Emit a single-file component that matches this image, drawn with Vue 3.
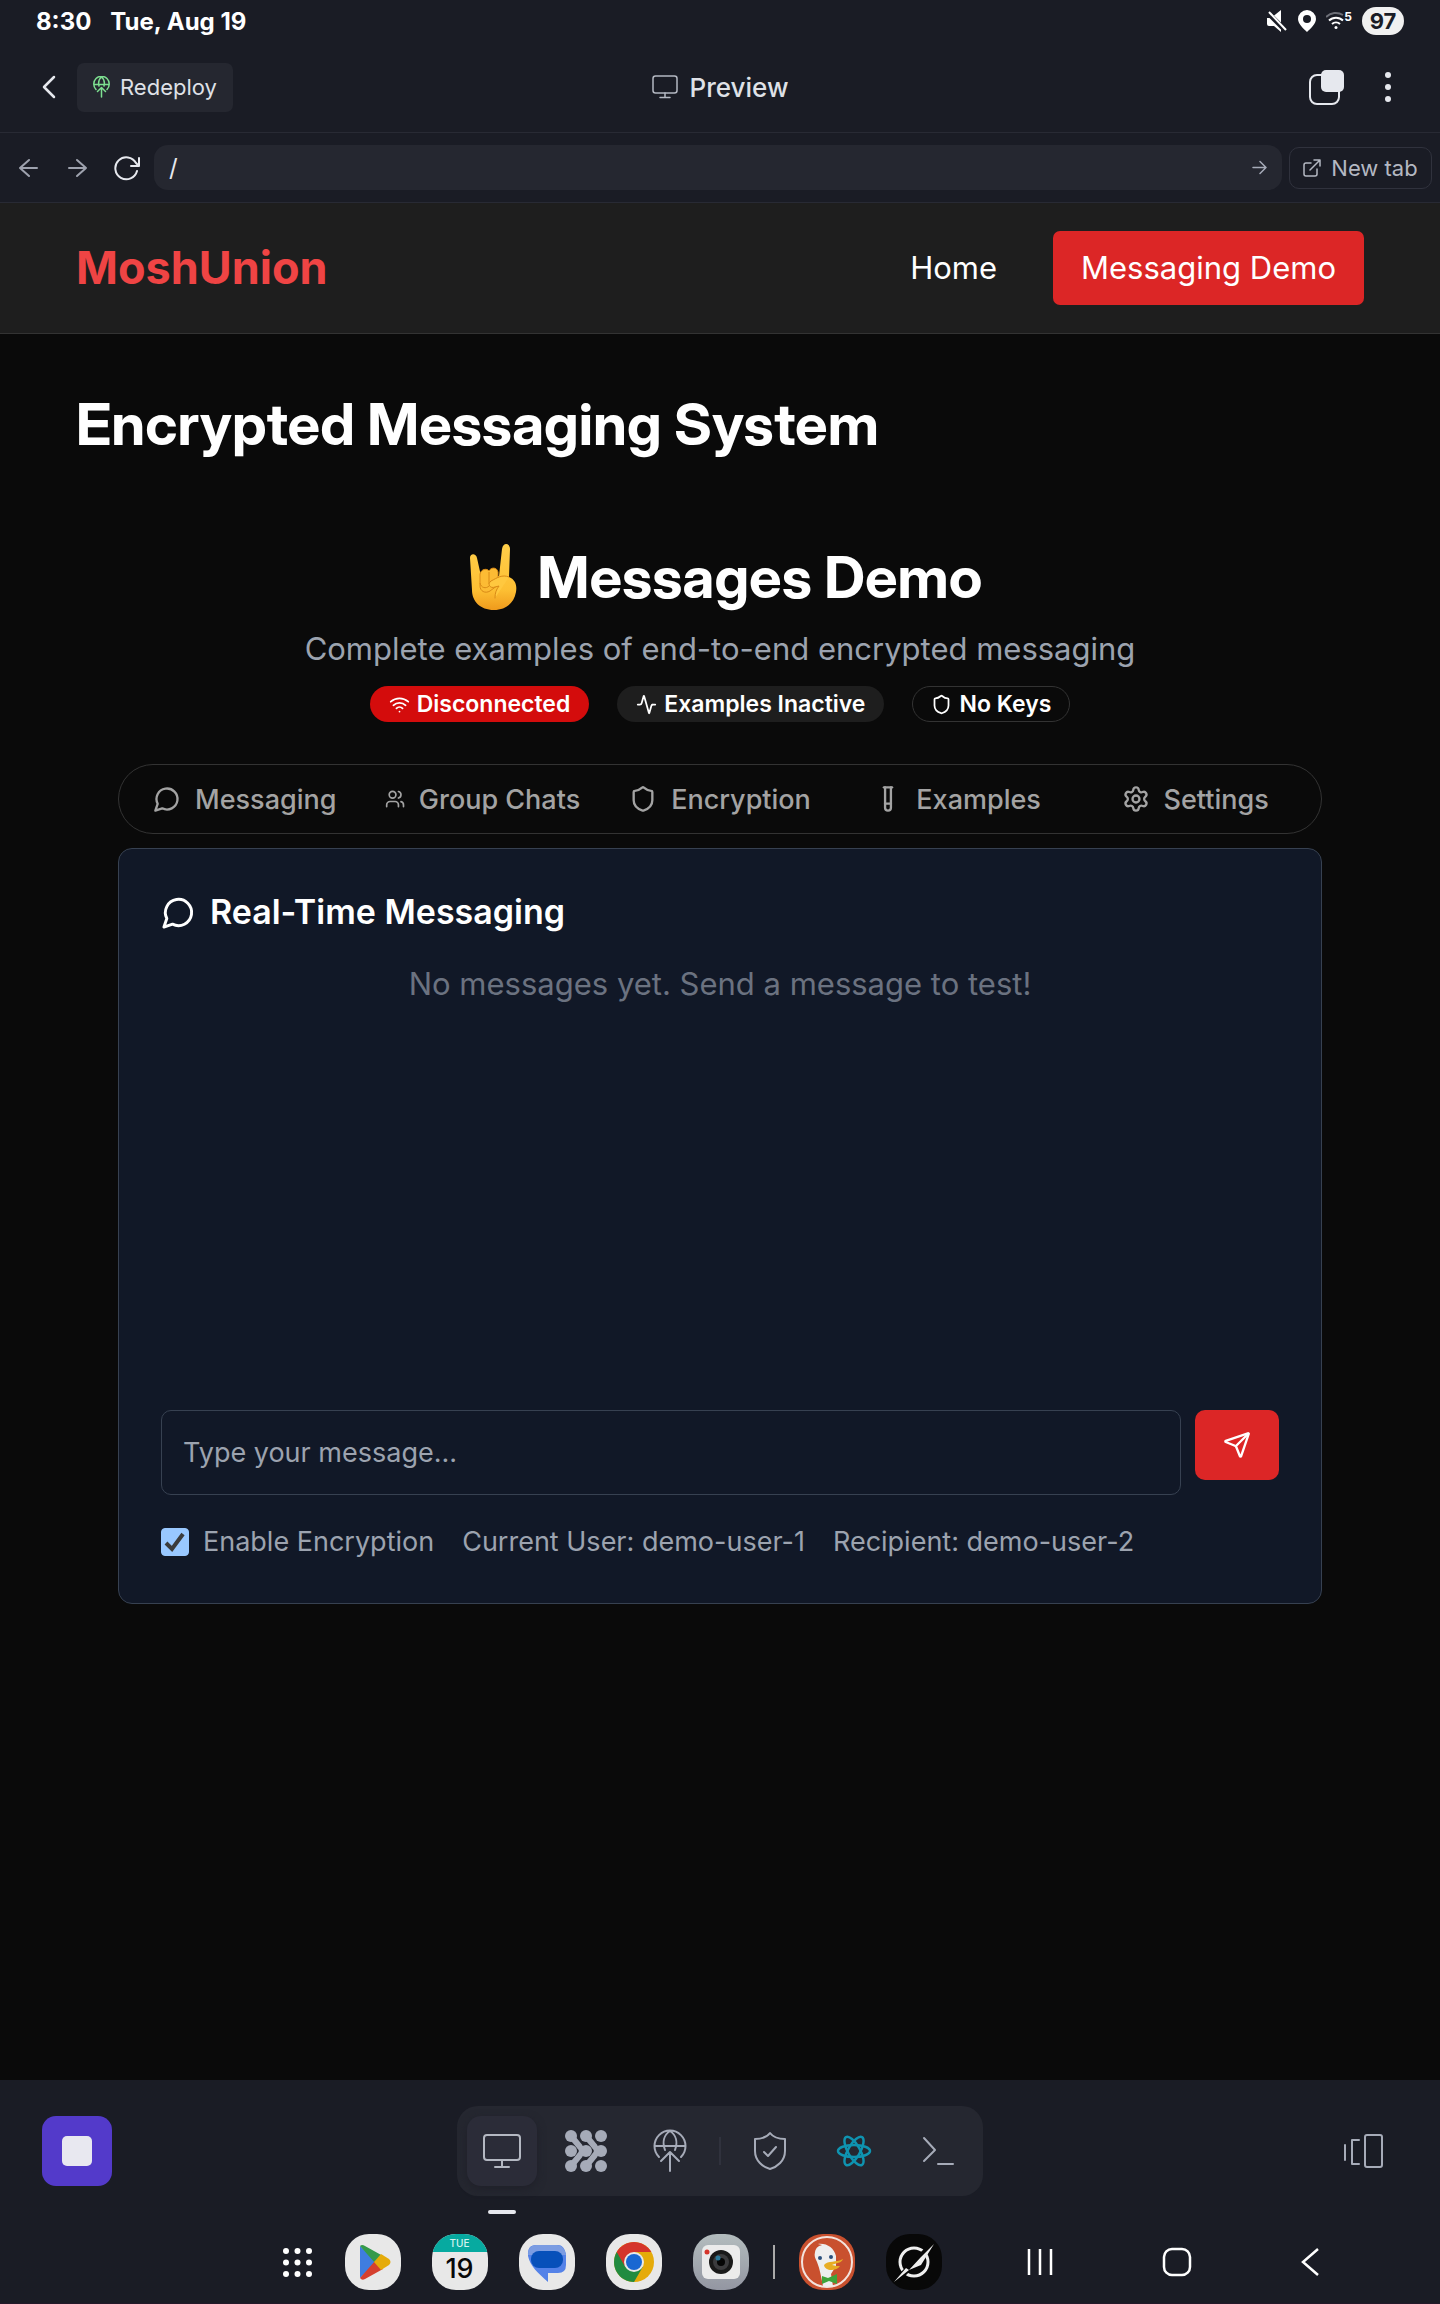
<script setup>
import { ref } from 'vue'

const url = ref('/')
const draft = ref('')
const encrypted = ref(true)

const icons = {
  message: ['M7.9 20A9 9 0 1 0 4 16.1L2 22Z'],
  users: ['M16 21v-2a4 4 0 0 0-4-4H6a4 4 0 0 0-4 4v2', 'M5 7a4 4 0 1 0 8 0a4 4 0 1 0-8 0', 'M22 21v-2a4 4 0 0 0-3-3.87', 'M16 3.13a4 4 0 0 1 0 7.75'],
  shield: ['M20 13c0 5-3.5 7.5-7.66 8.95a1 1 0 0 1-.67-.01C7.5 20.5 4 18 4 13V6a1 1 0 0 1 1-1c2 0 4.5-1.2 6.24-2.72a1.17 1.17 0 0 1 1.52 0C14.51 3.81 17 5 19 5a1 1 0 0 1 1 1z'],
  tube: ['M14.5 2v17.5c0 1.4-1.1 2.5-2.5 2.5c-1.4 0-2.5-1.1-2.5-2.5V2', 'M8.5 2h7', 'M14.5 16h-5'],
  settings: ['M9.671 4.136a2.34 2.34 0 0 1 4.659 0 2.34 2.34 0 0 0 3.319 1.915 2.34 2.34 0 0 1 2.33 4.033 2.34 2.34 0 0 0 0 3.831 2.34 2.34 0 0 1-2.33 4.033 2.34 2.34 0 0 0-3.319 1.915 2.34 2.34 0 0 1-4.659 0 2.34 2.34 0 0 0-3.32-1.915 2.34 2.34 0 0 1-2.33-4.033 2.34 2.34 0 0 0 0-3.831A2.34 2.34 0 0 1 6.35 6.051a2.34 2.34 0 0 0 3.319-1.915', 'M9 12a3 3 0 1 0 6 0a3 3 0 1 0-6 0'],
  wifi: ['M12 20h.01', 'M2 8.82a15 15 0 0 1 20 0', 'M5 12.859a10 10 0 0 1 14 0', 'M8.5 16.429a5 5 0 0 1 7 0'],
  activity: ['M22 12h-2.48a2 2 0 0 0-1.93 1.46l-2.35 8.36a.25.25 0 0 1-.48 0L9.24 2.18a.25.25 0 0 0-.48 0l-2.35 8.36A2 2 0 0 1 4.49 12H2'],
  send: ['M14.536 21.686a.5.5 0 0 0 .937-.024l6.5-19a.496.496 0 0 0-.635-.635l-19 6.5a.5.5 0 0 0-.024.937l7.93 3.18a2 2 0 0 1 1.112 1.11z', 'm21.854 2.147-10.94 10.939'],
}

const badges = [
  { label: 'Disconnected', icon: 'wifi', kind: 'danger' },
  { label: 'Examples Inactive', icon: 'activity', kind: 'muted' },
  { label: 'No Keys', icon: 'shield', kind: 'outline' },
]

const tabs = [
  { label: 'Messaging', icon: 'message' },
  { label: 'Group Chats', icon: 'users' },
  { label: 'Encryption', icon: 'shield' },
  { label: 'Examples', icon: 'tube' },
  { label: 'Settings', icon: 'settings' },
]
</script>

<template>
  <div class="screen">
    <div class="status">
      <span>8:30</span>
      <span class="date">Tue, Aug 19</span>
      <div class="status-icons">
        <svg width="21" height="22" viewBox="0 0 21 22"><path d="M0 8h4L14 0v22L7 16H2Q0 16 0 14z" fill="#fff" /><path d="M0 2L19 21" stroke="#1a1c25" stroke-width="5" /><path d="M2 2L19 20" stroke="#fff" stroke-width="2" /></svg>
        <svg width="18" height="22" viewBox="0 0 18 22"><path d="M9 0a9 9 0 0 1 9 9c0 5-6 10-9 13C6 19 0 14 0 9a9 9 0 0 1 9-9z" fill="#fff" /><circle cx="9" cy="9" r="4" fill="#1a1c25" /></svg>
        <div class="wifi">
          <svg width="20" height="20" viewBox="0 0 20 20" fill="none" stroke="#fff" stroke-width="2"><path d="M0 6a14 14 0 0 1 17-2" stroke="#6d6f77" /><path d="M3 9.500a10 10 0 0 1 14 0M6 13a6 6 0 0 1 8 0" /><circle cx="10" cy="16.500" r="1.500" fill="#fff" stroke="none" /></svg>
          <span>5</span>
        </div>
        <span class="battery">97</span>
      </div>
    </div>

    <header class="app-bar">
      <div class="bar-left">
        <button class="plain" aria-label="Back"><svg width="14" height="24" viewBox="0 0 14 24" fill="none" stroke="#e6e8ee" stroke-width="2.500" stroke-linecap="round" stroke-linejoin="round"><path d="M12 2L2 12l10 10" /></svg></button>
        <button class="redeploy">
          <svg width="17" height="22" viewBox="0 0 34 44" fill="none" stroke="#7ddf90" stroke-width="3" stroke-linecap="round" stroke-linejoin="round"><path d="M6 27a15.500 15.500 0 1 1 22 0M2 17h30M12 20C10 12 12 6 17 2c5 4 7 10 5 18M17 42V23M9 31l8-8 8 8" /></svg>
          Redeploy
        </button>
      </div>
      <div class="bar-title">
        <svg width="26" height="24" viewBox="0 0 26 24" fill="none" stroke="#b4b8c2" stroke-width="1.500" stroke-linecap="round"><rect x="1" y="1" width="24" height="17" rx="2.500" /><path d="M13 18v4.500M8 22.500h10" /></svg>
        <span>Preview</span>
      </div>
      <div class="bar-right">
        <button class="plain" aria-label="Windows"><svg width="35" height="35" viewBox="0 0 35 35"><rect x="1" y="5" width="29" height="29" rx="7" fill="none" stroke="#e6e8ee" stroke-width="2" /><rect x="12" y="0" width="23" height="22" rx="5" fill="#e6e8ee" /></svg></button>
        <button class="plain" aria-label="More"><svg width="8" height="32" viewBox="0 0 8 32" fill="#e6e8ee"><circle cx="4" cy="4" r="3" /><circle cx="4" cy="16" r="3" /><circle cx="4" cy="28" r="3" /></svg></button>
      </div>
    </header>

    <div class="url-bar">
      <button class="plain nav-btn" aria-label="Previous page"><svg width="20" height="20" viewBox="0 0 20 20" fill="none" stroke="#9ea2ae" stroke-width="2" stroke-linecap="round" stroke-linejoin="round"><path d="M18 10H1M10 2L1 10l9 8" /></svg></button>
      <button class="plain nav-btn" aria-label="Next page"><svg width="20" height="20" viewBox="0 0 20 20" fill="none" stroke="#9ea2ae" stroke-width="2" stroke-linecap="round" stroke-linejoin="round"><path d="M1 10h17M9 2l9 8-9 8" /></svg></button>
      <button class="plain nav-btn" aria-label="Reload"><svg width="26" height="26" viewBox="0 0 26 26" fill="none" stroke="#e6e8ee" stroke-width="2" stroke-linecap="round" stroke-linejoin="round"><path d="M23 16a11 11 0 1 1-1-8l3 3M25 3v8h-8" /></svg></button>
      <div class="address">
        <input v-model="url" type="text" aria-label="Address" />
        <button class="plain" aria-label="Go"><svg width="15" height="15" viewBox="0 0 15 15" fill="none" stroke="#a6abb8" stroke-width="1.500" stroke-linecap="round" stroke-linejoin="round"><path d="M1 7.500h13M8 1.500l6 6-6 6" /></svg></button>
      </div>
      <button class="new-tab">
        <svg width="18" height="18" viewBox="0 0 18 18" fill="none" stroke="#b4b8c2" stroke-width="1.500" stroke-linecap="round" stroke-linejoin="round"><path d="M8 4H3a2 2 0 0 0-2 2v9a2 2 0 0 0 2 2h9a2 2 0 0 0 2-2v-5M7 11L17 1M11 1h6v6" /></svg>
        New tab
      </button>
    </div>

    <nav class="site-nav">
      <a class="brand" href="#">MoshUnion</a>
      <div class="links">
        <a href="#">Home</a>
        <a class="current" href="#">Messaging Demo</a>
      </div>
    </nav>

    <main>
      <h1>Encrypted Messaging System</h1>
      <div class="demo">
        <h2>
          <svg class="horns" width="50" height="66" viewBox="0 0 50 66" role="img" aria-label="Rock on">
            <defs>
              <linearGradient id="skin" x1="0" y1="0" x2="0" y2="1"><stop offset="0" stop-color="#ffcf4a" /><stop offset=".7" stop-color="#fdbf33" /><stop offset="1" stop-color="#ef9a1c" /></linearGradient>
            </defs>
            <path d="M2 14c0-5 6-5 7 0l4 18h18l3-27c1-7 8-6 8 0l-1 28c7 3 8 9 7 15-2 11-10 18-22 18C12 66 4 57 4 46z" fill="url(#skin)" />
            <path d="M12 30c1-5 7-6 9-3 2-4 8-4 9 1v13l-8 6c-5 3-10 0-10-5z" fill="#fcbb34" stroke="#d98a16" />
            <path d="M21 28v12M12 39c1 5 6 6 9 3" fill="none" stroke="#d98a16" />
            <path d="M41 33c-7-3-12 1-18 4-4 3-1 8 4 6l4-1c-3 4-4 7-4 12" fill="#ffc83f" stroke="#d98a16" stroke-linecap="round" />
          </svg>
          <span>Messages Demo</span>
        </h2>
        <p class="subtitle">Complete examples of end-to-end encrypted messaging</p>
        <div class="badges">
          <span v-for="b in badges" :key="b.label" class="badge" :class="b.kind">
            <svg class="stroke" width="21" height="21" viewBox="0 0 24 24"><path v-for="d in icons[b.icon]" :key="d" :d="d" /></svg>
            {{ b.label }}
          </span>
        </div>

        <div class="tabs" role="tablist">
          <button v-for="t in tabs" :key="t.label" role="tab">
            <svg class="stroke" width="28" height="28" viewBox="0 0 24 24"><path v-for="d in icons[t.icon]" :key="d" :d="d" /></svg>
            {{ t.label }}
          </button>
        </div>

        <section class="card">
          <h3>
            <svg class="stroke" width="35" height="35" viewBox="0 0 24 24"><path :d="icons.message[0]" /></svg>
            Real-Time Messaging
          </h3>
          <div class="messages"><p>No messages yet. Send a message to test!</p></div>
          <form class="composer" @submit.prevent>
            <input v-model="draft" type="text" placeholder="Type your message..." aria-label="Message" />
            <button type="submit" aria-label="Send"><svg class="stroke" width="28" height="28" viewBox="0 0 24 24"><path v-for="d in icons.send" :key="d" :d="d" /></svg></button>
          </form>
          <div class="options">
            <label for="encrypt">
              <span class="check">
                <input id="encrypt" v-model="encrypted" type="checkbox" />
                <svg v-if="encrypted" width="28" height="28" viewBox="0 0 28 28" fill="none" stroke="#3b3b3b" stroke-width="4"><path d="M5 15l6 6L22 6" /></svg>
              </span>
              Enable Encryption
            </label>
            <span>Current User: demo-user-1</span>
            <span>Recipient: demo-user-2</span>
          </div>
        </section>
      </div>
    </main>

    <footer>
      <div class="tool-row">
        <button class="stop" aria-label="Stop"><svg width="30" height="30" viewBox="0 0 30 30"><rect width="30" height="30" rx="5" fill="#e8e8f0" /></svg></button>
        <div class="tools">
          <button class="active" aria-label="Preview"><svg width="38" height="36" viewBox="0 0 38 36" fill="none" stroke="#b4b8c2" stroke-width="2" stroke-linecap="round"><rect x="1" y="2" width="36" height="25" rx="3" /><path d="M19 27v7M12 34h14" /></svg></button>
          <button aria-label="Agent">
            <svg width="42" height="42" viewBox="0 0 42 42" fill="#a6abb8">
              <circle cx="6" cy="6" r="6" /><circle cx="21" cy="6" r="6" /><circle cx="36" cy="6" r="6" />
              <circle cx="6" cy="21" r="6" /><circle cx="21" cy="21" r="6" /><circle cx="36" cy="21" r="6" />
              <circle cx="6" cy="36" r="6" /><circle cx="21" cy="36" r="6" /><circle cx="36" cy="36" r="6" />
              <path d="M6 6L15 17Q19 21 15 25L6 36M21 6L30 17Q34 21 30 25L21 36" fill="none" stroke="#a6abb8" stroke-width="6" />
            </svg>
          </button>
          <button aria-label="Deployments"><svg width="34" height="44" viewBox="0 0 34 44" fill="none" stroke="#a6abb8" stroke-width="2" stroke-linecap="round" stroke-linejoin="round"><path d="M6 28a15.500 15.500 0 1 1 22 0M2 17h30M12 21C9 13 11 6 17 2c6 4 8 11 5 19M17 42V23M8 32l9-9 9 9" /></svg></button>
          <span class="divider"></span>
          <button aria-label="Security"><svg width="34" height="40" viewBox="0 0 34 40" fill="none" stroke="#a6abb8" stroke-width="2" stroke-linecap="round" stroke-linejoin="round"><path d="M17 2c3 4 9 6 15 6v12c0 10-8 16-15 18C10 36 2 30 2 20V8c6 0 12-2 15-6zM11 21l4 4 8-9" /></svg></button>
          <button aria-label="React">
            <svg width="36" height="36" viewBox="0 0 36 36" fill="none" stroke="#0f93b0" stroke-width="2.500"><ellipse cx="18" cy="18" rx="16" ry="6" /><ellipse cx="18" cy="18" rx="16" ry="6" transform="rotate(60 18 18)" /><ellipse cx="18" cy="18" rx="16" ry="6" transform="rotate(120 18 18)" /></svg>
          </button>
          <button aria-label="Shell"><svg width="32" height="30" viewBox="0 0 32 30" fill="none" stroke="#a6abb8" stroke-width="2" stroke-linecap="round" stroke-linejoin="round"><path d="M2 2l11 12L2 25M16 28h15" /></svg></button>
        </div>
        <button class="plain side" aria-label="Panels"><svg width="40" height="34" viewBox="0 0 40 34" fill="none" stroke="#a6abb8" stroke-width="2" stroke-linecap="round" stroke-linejoin="round"><path d="M2 11v15M16 6H9v24h7" /><rect x="22" y="1" width="17" height="32" rx="2" /></svg></button>
      </div>

      <div class="dock">
        <button class="plain dots" aria-label="All apps">
          <svg width="29" height="29" viewBox="0 0 29 29" fill="#fff"><circle v-for="n in 9" :key="n" :cx="3 + ((n - 1) % 3) * 11.500" :cy="3 + Math.floor((n - 1) / 3) * 11.500" r="3" /></svg>
        </button>
        <div class="apps">
          <button class="app" aria-label="Play Store"><svg width="56" height="56" viewBox="0 0 56 56"><path d="M15 12v32l17-16z" fill="#3f7de0" /><path d="M15 12q2-2 5 0l18 10-8 7z" fill="#359a4b" /><path d="M15 44q2 3 5 1l18-10-8-8z" fill="#d5402f" /><path d="M36 20l8 5q3 3 0 6l-8 5-7-8z" fill="#e5ab0a" /></svg></button>
          <button class="app calendar" aria-label="Calendar"><span class="cal-head">TUE</span><span class="cal-day">19</span></button>
          <button class="app" aria-label="Messages"><svg width="56" height="56" viewBox="0 0 56 56"><path d="M17 11h22q6 0 8 9v11q0 8-8 8H29v9C19 39 11 32 9 22q-1-11 8-11z" fill="#5482e8" /><path d="M17 11h21q7 0 9 10H9q0-10 8-10z" fill="#7b9ce2" /><rect x="12" y="17" width="32" height="17" rx="8" fill="#0750ba" /></svg></button>
          <button class="app" aria-label="Chrome"><svg width="56" height="56" viewBox="0 0 56 56"><circle cx="28" cy="28" r="20" fill="#e5ab0a" /><path d="M10.700 18A20 20 0 0 0 28 48l8.700-15L28 28z" fill="#218b40" /><path d="M10.700 18A20 20 0 0 1 45.300 18H28v10l-8.700 5z" fill="#d5352b" /><circle cx="28" cy="28" r="10" fill="#e8e8e8" /><circle cx="28" cy="28" r="8" fill="#1967d2" /></svg></button>
          <button class="app camera" aria-label="Camera"><svg width="56" height="56" viewBox="0 0 56 56"><rect x="9" y="11" width="38" height="34" rx="6" fill="#ebebeb" /><circle cx="14" cy="18" r="2.500" fill="#d5352b" /><circle cx="28" cy="28" r="12" fill="#191919" /><circle cx="28" cy="28" r="8" fill="#3b3b3d" /><circle cx="28" cy="28" r="4" fill="#050505" /><circle cx="25" cy="24" r="2.500" fill="#2b7a9b" /></svg></button>
        </div>
        <span class="dock-divider"></span>
        <div class="apps">
          <button class="app duck" aria-label="DuckDuckGo"><svg width="56" height="56" viewBox="0 0 56 56"><circle cx="28" cy="28" r="25" fill="none" stroke="#f4e3dd" stroke-width="2" /><path d="M16 18c1-5 4-6 7-7l-4-1c9-1 16 4 18 12v10l-5 8 2 12q-5 1-10 0c-2-9-3-17-6-24-2-4-3-6-2-10z" fill="#eee" /><circle cx="21" cy="24" r="2" fill="#2a4f7c" /><circle cx="32" cy="23" r="2" fill="#2a4f7c" /><path d="M25 31c4-5 12-2 19-6-1 4-7 4-11 6 3 1 6 1 8 1-3 5-15 6-16-1z" fill="#e8ad24" /><path d="M23 42l6 2 9-4v10l-8-3-7 3z" fill="#3fa33a" /></svg></button>
          <button class="app grok" aria-label="Grok"><svg width="56" height="56" viewBox="0 0 56 56"><circle cx="28" cy="28" r="14" fill="none" stroke="#efefef" stroke-width="3" /><path d="M11 46L46 11" stroke="#080808" stroke-width="6" /><path d="M8 48l12-14 3 2zM48 10L35 31l-12 5 12-13z" fill="#efefef" /></svg></button>
        </div>
        <div class="system">
          <button class="plain" aria-label="Recents"><svg width="28" height="28" viewBox="0 0 28 28" stroke="#fff" stroke-width="2.500"><path d="M3 1v26M14 1v26M25 1v26" /></svg></button>
          <button class="plain" aria-label="Home screen"><svg width="30" height="30" viewBox="0 0 30 30"><rect x="2" y="2" width="26" height="26" rx="8" fill="none" stroke="#fff" stroke-width="2.500" /></svg></button>
          <button class="plain" aria-label="System back"><svg width="20" height="28" viewBox="0 0 20 28" fill="none" stroke="#fff" stroke-width="2.500"><path d="M18 1L3 14l15 13" /></svg></button>
        </div>
      </div>
    </footer>
  </div>
</template>

<style>
body {
  margin: 0;
  background: #0a0a0a;
}
</style>

<style scoped>
.screen {
  display: flex;
  flex-direction: column;
  min-height: 100vh;
  background: #0a0a0a;
  color: #fff;
  font-family: Inter, "Liberation Sans", sans-serif;
}
.screen *, .screen *::before {
  box-sizing: border-box;
}
button, input {
  font-family: inherit;
  color: inherit;
}
button {
  display: flex;
  align-items: center;
  justify-content: center;
  margin: 0;
  padding: 0;
  border: 0;
  cursor: pointer;
}
svg {
  display: block;
  flex-shrink: 0;
}
a {
  color: inherit;
  text-decoration: none;
}
h1, h2, h3, p {
  margin: 0;
}
.plain {
  background: none;
}
.stroke {
  fill: none;
  stroke: currentColor;
  stroke-width: 2;
  stroke-linecap: round;
  stroke-linejoin: round;
}

.status {
  display: flex;
  align-items: center;
  height: 42px;
  padding: 0 36px;
  background: #1a1c25;
  font-size: 24px;
  font-weight: 700;
}
.date {
  margin-left: 19px;
}
.status-icons {
  display: flex;
  align-items: center;
  gap: 10px;
  margin-left: auto;
}
.wifi {
  display: flex;
  align-items: flex-start;
}
.wifi span {
  font-size: 12px;
  line-height: 12px;
  margin-left: -2px;
}
.battery {
  width: 42px;
  border-radius: 14px;
  background: #f0f0f0;
  color: #1a1c25;
  font-size: 22px;
  line-height: 28px;
  text-align: center;
}

.app-bar {
  display: grid;
  grid-template-columns: 1fr auto 1fr;
  align-items: center;
  height: 91px;
  padding: 0 42px;
  border-bottom: 1px solid #282a34;
  background: #1a1c25;
  color: #dfe1e7;
}
.bar-left, .bar-title, .bar-right {
  display: flex;
  align-items: center;
}
.bar-left {
  gap: 21px;
}
.bar-right {
  justify-content: flex-end;
  gap: 40px;
  padding-right: 6px;
}
.bar-title {
  gap: 12px;
  font-size: 26px;
  font-weight: 500;
}
.redeploy {
  gap: 10px;
  height: 49px;
  padding: 0 16px;
  border-radius: 7px;
  background: #252730;
  font-size: 22px;
}

.url-bar {
  display: flex;
  align-items: center;
  height: 70px;
  padding: 0 8px 0 4px;
  border-bottom: 1px solid #282a34;
  background: #1a1c25;
}
.nav-btn {
  width: 49px;
  height: 45px;
}
.address {
  display: flex;
  flex: 1;
  align-items: center;
  height: 45px;
  margin: 0 7px 0 3px;
  padding: 0 15px;
  border-radius: 14px;
  background: #252730;
}
.address input {
  flex: 1;
  min-width: 0;
  padding: 0;
  border: 0;
  outline: 0;
  background: none;
  color: #e6e8ee;
  font-size: 24px;
}
.new-tab {
  gap: 10px;
  width: 143px;
  height: 42px;
  border: 1px solid #30323d;
  border-radius: 10px;
  background: none;
  color: #b4b8c2;
  font-size: 22px;
  white-space: nowrap;
}

.site-nav {
  display: flex;
  align-items: center;
  justify-content: space-between;
  padding: 28px 76px;
  border-bottom: 1px solid #333;
  background: #1e1e1e;
  font-size: 31px;
  line-height: 46px;
}
.brand {
  color: #ef4444;
  font-size: 45px;
  font-weight: 700;
}
.links {
  display: flex;
  align-items: center;
  gap: 28px;
}
.links a {
  padding: 14px 28px;
  border-radius: 7px;
}
.links .current {
  background: #dc2626;
}

main {
  flex: 1;
  padding: 56px 76px;
}
h1, h2 {
  font-family: "Inter Display", Inter, "Liberation Sans", sans-serif;
  font-size: 58px;
  line-height: 68px;
  font-weight: 700;
}
.demo {
  padding: 85px 42px 0;
}
h2 {
  display: flex;
  align-items: center;
  justify-content: center;
  gap: 20px;
  padding-left: 10px;
}
.subtitle {
  margin-top: 15px;
  color: #9ca3af;
  font-size: 31px;
  line-height: 46px;
  text-align: center;
}
.badges {
  display: flex;
  justify-content: center;
  gap: 28px;
  margin: 14px 0 42px;
}
.badge {
  display: flex;
  align-items: center;
  gap: 7px;
  height: 36px;
  padding: 0 18px;
  border: 1px solid transparent;
  border-radius: 18px;
  font-size: 23px;
  font-weight: 600;
}
.danger {
  background: #d40c0c;
}
.muted {
  background: #1e1e1e;
}
.outline {
  border-color: #333;
}
.tabs {
  display: grid;
  grid-template-columns: repeat(5, 1fr);
  height: 70px;
  padding: 7px;
  border: 1px solid #333;
  border-radius: 35px;
}
.tabs button {
  gap: 14px;
  min-width: 0;
  padding: 0 21px;
  background: none;
  color: #a3a3a3;
  font-size: 27px;
  font-weight: 500;
  white-space: nowrap;
}
.tabs svg {
  flex-shrink: 1;
}
.card {
  margin-top: 14px;
  padding: 42px;
  border: 1px solid #374151;
  border-radius: 14px;
  background: #111827;
}
h3 {
  display: flex;
  align-items: center;
  gap: 14px;
  font-size: 34px;
  line-height: 42px;
  font-weight: 600;
}
.messages {
  min-height: 421px;
  margin: 28px 0;
  color: #6b7280;
  font-size: 31px;
  line-height: 46px;
  text-align: center;
}
.composer {
  display: flex;
  align-items: flex-start;
  gap: 14px;
}
.composer input {
  flex: 1;
  min-width: 0;
  height: 85px;
  padding: 0 21px;
  border: 1px solid #374151;
  border-radius: 10px;
  outline: 0;
  background: transparent;
  font-size: 27px;
}
.composer input::placeholder {
  color: #9ca3af;
  opacity: 1;
}
.composer button {
  width: 84px;
  height: 70px;
  border-radius: 10px;
  background: #dc2626;
}
.options {
  display: flex;
  gap: 28px;
  margin-top: 28px;
  color: #9ca3af;
  font-size: 27px;
  line-height: 38px;
}
.options label {
  display: flex;
  align-items: center;
  gap: 14px;
}
.check {
  display: grid;
}
.check > * {
  grid-area: 1 / 1;
}
.check svg {
  pointer-events: none;
}
.check input {
  width: 28px;
  height: 28px;
  margin: 0;
  border: 1px solid #99c8ff;
  border-radius: 4px;
  appearance: none;
}
.check input:checked {
  background: #99c8ff;
}

footer {
  padding-top: 26px;
  border-bottom: 1px solid #24182a;
  background: #1a1c25;
}
.tool-row {
  display: grid;
  grid-template-columns: 1fr auto 1fr;
  align-items: center;
  padding: 0 57px 0 42px;
}
.stop {
  width: 70px;
  height: 70px;
  border-radius: 14px;
  background: #533aca;
}
.side {
  justify-self: end;
}
.tools {
  display: flex;
  align-items: center;
  gap: 14px;
  margin-left: 15px;
  padding: 10px;
  border-radius: 21px;
  background: #252730;
}
.tools button {
  width: 70px;
  height: 70px;
  border-radius: 14px;
  background: none;
}
.tools .active {
  position: relative;
  background: #2b2c38;
  box-shadow: 0 3px 8px #1f2029;
}
.tools .active::after {
  content: "";
  position: absolute;
  top: 94px;
  width: 28px;
  height: 4px;
  border-radius: 2px;
  background: #e6e8ee;
}
.divider {
  width: 2px;
  height: 28px;
  background: #30323d;
}
.dock {
  display: flex;
  align-items: center;
  justify-content: center;
  padding: 38px 0 13px 162px;
}
.dots {
  margin-right: 33px;
}
.apps {
  display: flex;
  gap: 31px;
}
.app {
  width: 56px;
  height: 56px;
  overflow: hidden;
  border-radius: 24px;
  background: #e8e8e8;
}
.calendar {
  flex-direction: column;
  justify-content: flex-start;
  color: #080808;
}
.cal-head {
  width: 100%;
  background: #07aaa0;
  color: #d5f3f0;
  font-size: 10px;
  font-weight: 500;
  line-height: 18px;
}
.cal-day {
  font-size: 27px;
  font-weight: 500;
  line-height: 34px;
}
.camera {
  background: linear-gradient(#b3bcbe, #9396a2);
}
.duck {
  background: #c9502e;
}
.grok {
  background: #080808;
}
.dock-divider {
  width: 2px;
  height: 34px;
  margin: 0 24px;
  background: #aaa;
}
.system {
  display: flex;
  align-items: center;
  gap: 108px;
  margin-left: 84px;
}
</style>
